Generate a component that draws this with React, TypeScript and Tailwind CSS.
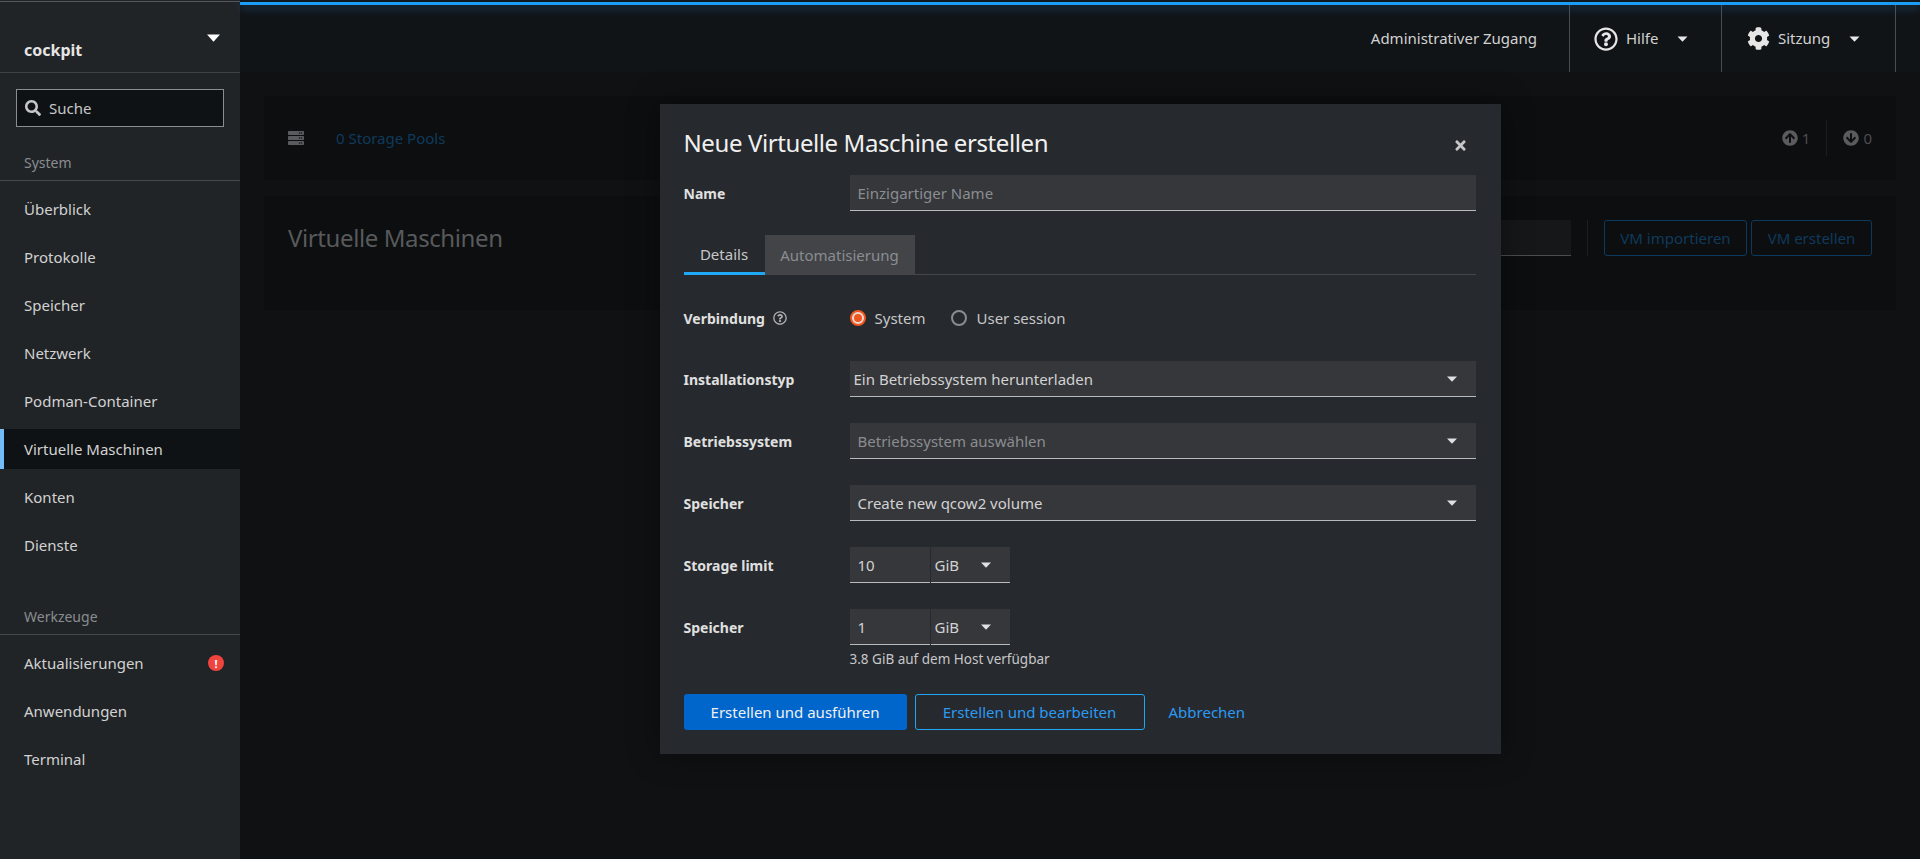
import React from 'react';
import { FaSearch, FaCog, FaArrowCircleUp, FaArrowCircleDown, FaTimes, FaServer, FaRegQuestionCircle } from 'react-icons/fa';

const Caret = ({ className = '' }: { className?: string }) => (
  <svg viewBox="0 0 10 6" className={`w-[10px] h-[6px] fill-current ${className}`}>
    <path d="M0 0.4 H10 L5 5.8 Z" />
  </svg>
);

const NavItem = ({ label, active, alert }: { label: string; active?: boolean; alert?: boolean }) => (
  <div className={`flex items-center justify-between h-10 pr-4 ${active ? 'bg-[#0f1214] border-l-4 border-[#73bcf7] pl-5' : 'pl-6'}`}>
    <span className="text-[#d2d2d2]">{label}</span>
    {alert && (
      <span className="w-4 h-4 rounded-full bg-[#f0443e] text-white text-[11px] font-bold flex items-center justify-center leading-none">!</span>
    )}
  </div>
);

const NavHeading = ({ label, className }: { label: string; className: string }) => (
  <div className={`${className} px-6 h-6 flex items-center text-[14px] text-[#8a8d90]`}>{label}</div>
);

const FormRow = ({ label, children }: { label: React.ReactNode; children: React.ReactNode }) => (
  <div className="flex items-center h-9">
    <div className="w-[166px] shrink-0 text-[14px] font-bold text-[#e0e0e0] flex items-center gap-2">{label}</div>
    <div className="flex-1 min-w-0">{children}</div>
  </div>
);

const Select = ({ value, muted, px = 'pl-2' }: { value: string; muted?: boolean; px?: string }) => (
  <div className={`h-9 pt-px bg-[#36373b] border-b border-[#b8bbbe] flex items-center justify-between ${px} pr-[19px]`}>
    <span className={muted ? 'text-[#8a8d90]' : 'text-[#d2d2d2]'}>{value}</span>
    <Caret className="text-[#e0e0e0]" />
  </div>
);

const SizeField = ({ value }: { value: string }) => (
  <div className="flex w-[160px] gap-px">
    <div className="w-[80px] h-9 pt-px bg-[#36373b] border-b border-[#b8bbbe] flex items-center pl-2 text-[#d2d2d2]">{value}</div>
    <div className="w-[79px] h-9 pt-px bg-[#36373b] border-b border-[#b8bbbe] flex items-center justify-between pl-[4px] pr-[19px] text-[#d2d2d2]">
      <span>GiB</span>
      <Caret className="text-[#e0e0e0]" />
    </div>
  </div>
);

const Radio = ({ label, checked }: { label: string; checked?: boolean }) => (
  <div className="flex items-center gap-[9px] text-[#c6c7c8]">
    {checked ? (
      <span className="w-4 h-4 rounded-full bg-[#e8d9d2] border-2 border-[#f0561d] flex items-center justify-center">
        <span className="w-2 h-2 rounded-full bg-[#f0561d]" />
      </span>
    ) : (
      <span className="w-4 h-4 rounded-full bg-[#26292d] border-2 border-[#8a8d90]" />
    )}
    {label}
  </div>
);

export default function App() {
  return (
    <div className="flex h-screen overflow-hidden bg-[#0f1113] text-[15px] font-['Noto_Sans',sans-serif]">
      <aside className="w-[240px] shrink-0 bg-[#212427] flex flex-col pt-px">
        <div className="h-px bg-[#55575a]" />
        <div className="h-[71px] border-b border-[#3f4245] relative pl-6 flex items-end pb-[10px]">
          <span className="font-bold text-[#e6e6e6] text-[16px]">cockpit</span>
          <Caret className="absolute right-[20px] top-[32px] text-white w-[13px] h-[8px]" />
        </div>
        <div className="mx-4 mt-4 h-[38px] bg-[#0f1214] border border-[#8a8d90] flex items-center pl-2 text-[#c6c7c8]">
          <FaSearch className="w-4 h-4 mr-2 text-[#c6c7c8]" />
          Suche
        </div>
        <NavHeading label="System" className="mt-[23px]" />
        <div className="mt-[6px] border-t border-[#46494c] pt-2 flex flex-col gap-2">
          {['Überblick', 'Protokolle', 'Speicher', 'Netzwerk', 'Podman-Container'].map(l => (
            <NavItem key={l} label={l} />
          ))}
          <NavItem label="Virtuelle Maschinen" active />
          <NavItem label="Konten" />
          <NavItem label="Dienste" />
        </div>
        <NavHeading label="Werkzeuge" className="mt-[39px]" />
        <div className="mt-[6px] border-t border-[#46494c] pt-2 flex flex-col gap-2">
          <NavItem label="Aktualisierungen" alert />
          <NavItem label="Anwendungen" />
          <NavItem label="Terminal" />
        </div>
      </aside>

      <main className="flex-1 min-w-0 relative flex flex-col pt-[2px]">
        <div className="relative z-10 h-[3px] bg-[#1b9cf5] shadow-[0_3px_8px_rgba(43,154,243,0.4)]" />
        <header className="h-[67px] bg-[#111417] flex justify-end pr-6 text-[#d2d2d2]">
          <div className="flex items-center pr-[32px]">Administrativer Zugang</div>
          <div className="flex items-center w-[152px] border-l border-[#4a4d50] pl-6">
            <FaRegQuestionCircle className="w-6 h-6 mr-2 text-[#e6e6e6]" />
            Hilfe
            <Caret className="ml-[19px] w-[11px] text-[#e6e6e6]" />
          </div>
          <div className="flex items-center w-[175px] border-x border-[#4a4d50] pl-[25px]">
            <FaCog className="w-[23px] h-[23px] mr-2 text-[#e6e6e6]" />
            Sitzung
            <Caret className="ml-[19px] w-[11px] text-[#e6e6e6]" />
          </div>
        </header>

        <div className="flex-1 pt-6 px-6 flex flex-col gap-4">
          <section className="h-[84px] bg-[#0c0e10] flex items-center pl-6 pr-6">
            <FaServer className="w-4 h-4 text-[#5a5b5d]" />
            <span className="ml-8 text-[#0f3a5c]">0 Storage Pools</span>
            <div className="ml-auto flex items-center text-[#4c4d4f]">
              <FaArrowCircleUp className="w-4 h-4 mr-1 text-[#5a5b5d]" />
              <span>1</span>
              <span className="w-px h-9 bg-[#1c1e20] mx-4" />
              <FaArrowCircleDown className="w-4 h-4 mr-1 text-[#5a5b5d]" />
              <span>0</span>
            </div>
          </section>
          <section className="h-[114px] bg-[#0c0e10] flex items-start pt-6 pl-6 pr-6">
            <h2 className="text-[24px] leading-9 tracking-[-0.4px] text-[#58595b]">Virtuelle Maschinen</h2>
            <div className="ml-auto flex items-center">
              <div className="w-[200px] h-9 bg-[#161719] border-b border-[#4c4d4f]" />
              <span className="w-px h-9 bg-[#1c1e20] mx-4" />
              <span className="h-9 w-[143px] border border-[#0c3a5e] rounded-[3px] text-[#0f3a5c] flex items-center justify-center">VM importieren</span>
              <span className="ml-1 h-9 w-[121px] border border-[#0c3a5e] rounded-[3px] text-[#0f3a5c] flex items-center justify-center">VM erstellen</span>
            </div>
          </section>
        </div>

        {/* modal dialog, centered over the page */}
        <div className="absolute inset-0 z-20 flex items-center justify-center pointer-events-none">
          <div className="w-[841px] h-[650px] mb-px bg-[#26292d] pl-6 pr-[25px] pt-[19px] shadow-[0_0_30px_rgba(0,0,0,0.4)] flex flex-col">
            <div className="flex justify-between items-start h-[52px]">
              <h1 className="text-[24px] leading-[40px] tracking-[-0.4px] text-[#f0f0f0]">Neue Virtuelle Maschine erstellen</h1>
              <FaTimes className="w-[15px] h-[15px] mt-[15px] mr-[8px] text-[#c6c7c8]" />
            </div>
            <FormRow label="Name">
              <div className="h-9 pt-px bg-[#36373b] border-b border-[#b8bbbe] flex items-center pl-2 text-[#8a8d90]">Einzigartiger Name</div>
            </FormRow>
            <div className="mt-6 h-10 flex border-b border-[#444648]">
              <div className="w-[81px] h-10 pt-px border-b-[3px] border-[#1fa7f8] flex items-center justify-center text-[#c6c7c8]">Details</div>
              <div className="w-[150px] h-10 pt-px bg-[#424448] flex items-center justify-center text-[#8a8d90]">Automatisierung</div>
            </div>
            <div className="mt-[25px]">
              <FormRow label={<>Verbindung <FaRegQuestionCircle className="w-[14px] h-[14px] text-[#b0b1b3]" /></>}>
                <div className="flex items-center gap-[26px]">
                  <Radio label="System" checked />
                  <Radio label="User session" />
                </div>
              </FormRow>
            </div>
            <div className="mt-[25px]">
              <FormRow label="Installationstyp"><Select value="Ein Betriebssystem herunterladen" px="pl-[4px]" /></FormRow>
            </div>
            <div className="mt-[26px]">
              <FormRow label="Betriebssystem"><Select value="Betriebssystem auswählen" muted /></FormRow>
            </div>
            <div className="mt-[26px]">
              <FormRow label="Speicher"><Select value="Create new qcow2 volume" /></FormRow>
            </div>
            <div className="mt-[26px]">
              <FormRow label="Storage limit"><SizeField value="10" /></FormRow>
            </div>
            <div className="mt-[26px]">
              <FormRow label="Speicher"><SizeField value="1" /></FormRow>
            </div>
            <div className="ml-[166px] mt-[4px] text-[13.5px] leading-5 text-[#c6c7c8]">3.8 GiB auf dem Host verfügbar</div>
            <div className="mt-[25px] flex items-center">
              <span className="w-[223px] h-9 bg-[#0066cc] rounded-[3px] text-[#f0f0f0] flex items-center justify-center">Erstellen und ausführen</span>
              <span className="ml-2 w-[230px] h-9 border border-[#1fa7f8] rounded-[3px] text-[#2b9af3] flex items-center justify-center">Erstellen und bearbeiten</span>
              <span className="ml-6 text-[#2b9af3]">Abbrechen</span>
            </div>
          </div>
        </div>
      </main>
    </div>
  );
}
